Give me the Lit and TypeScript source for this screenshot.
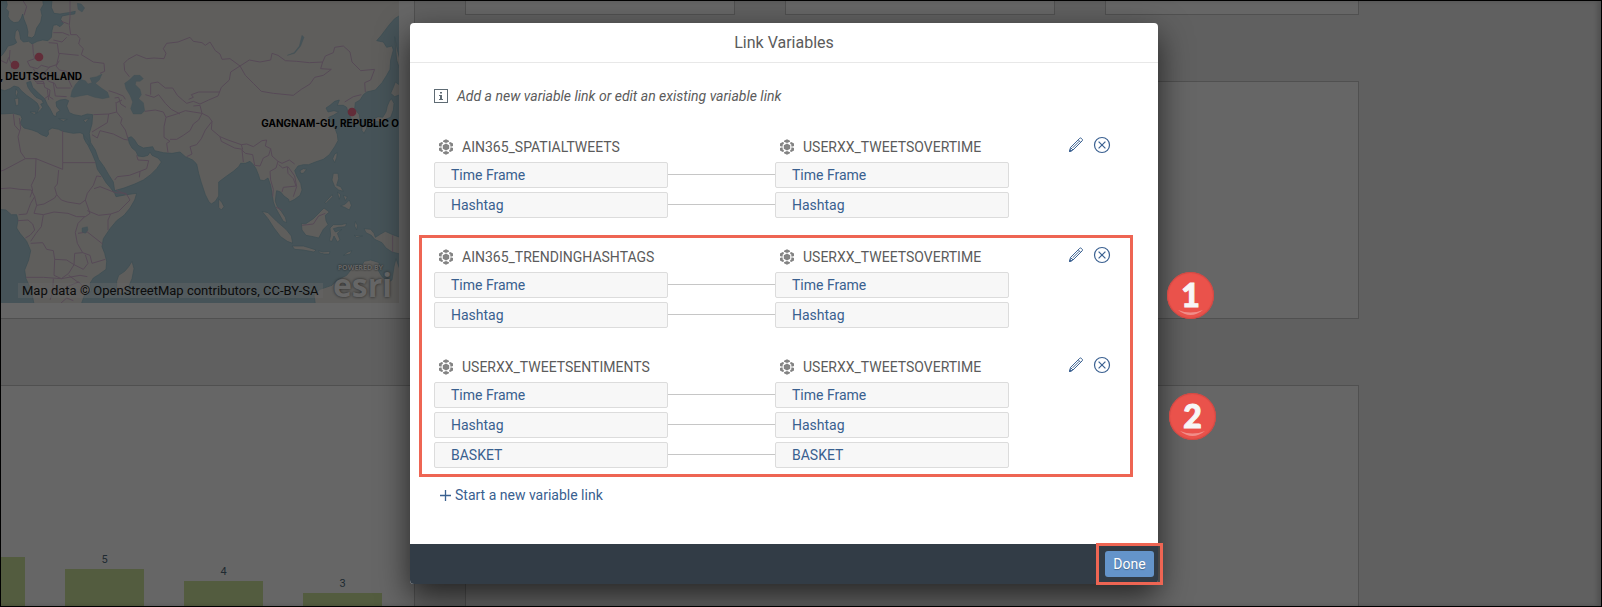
import { LitElement, html, css, svg } from "lit";
import { customElement, property } from "lit/decorators.js";

interface LinkGroup {
  source: string;
  target: string;
  variables: string[];
}

const FIRST: LinkGroup = {
  source: "AIN365_SPATIALTWEETS",
  target: "USERXX_TWEETSOVERTIME",
  variables: ["Time Frame", "Hashtag"],
};

const HIGHLIGHTED: LinkGroup[] = [
  {
    source: "AIN365_TRENDINGHASHTAGS",
    target: "USERXX_TWEETSOVERTIME",
    variables: ["Time Frame", "Hashtag"],
  },
  {
    source: "USERXX_TWEETSENTIMENTS",
    target: "USERXX_TWEETSOVERTIME",
    variables: ["Time Frame", "Hashtag", "BASKET"],
  },
];

// Column heights in units of the value axis; the first column runs off the left edge.
const COLUMNS = [
  { value: 6, label: "" },
  { value: 5, label: "5" },
  { value: 4, label: "4" },
  { value: 3, label: "3" },
];

const modelIcon = html`<svg class="model" viewBox="0 0 14 16" width="14" height="16" aria-hidden="true">
  <path d="M7 4.400l3.200 1.800v3.600L7 11.600 3.800 9.800V6.200z" />
  <path d="M4 1.800L7 .2l3 1.600v1L7 4 4 2.800z" />
  <path d="M4 14.200l3 1.600 3-1.600v-1L7 12l-3 1.200z" />
  <path d="M0 4.600l2.800-1.600 1 .600v1.300L2.700 5.600v1.900H1.200L0 6.900z" />
  <path d="M14 4.600L11.200 3l-1 .600v1.300l1.100.7v1.900h1.500l1.200-.6z" />
  <path d="M0 11.400L2.800 13l1-.6v-1.300l-1.100-.7V8.500H1.200L0 9.100z" />
  <path d="M14 11.400L11.200 13l-1-.6v-1.300l1.100-.7V8.500h1.500l1.200.6z" />
</svg>`;

@customElement("variable-link")
export class VariableLink extends LitElement {
  @property({ attribute: false }) group!: LinkGroup;

  static styles = css`
    :host {
      display: block;
    }
    .head,
    .row {
      display: grid;
      grid-template-columns: 234px 107px 234px 1fr;
      align-items: center;
    }
    .head {
      height: 32px;
    }
    .name {
      display: flex;
      align-items: center;
      gap: 9px;
      padding: 2px 0 0 5px;
      color: #5b5b5b;
      white-space: nowrap;
    }
    .target {
      grid-column: 3;
    }
    .model {
      fill: #838383;
      flex: none;
    }
    .actions {
      display: flex;
      justify-content: flex-end;
      align-items: center;
      gap: 9px;
      padding: 0 23px 2px 0;
    }
    button {
      display: flex;
      padding: 0;
      border: 0;
      background: none;
      color: #3b6191;
    }
    .row + .row {
      margin-top: 4px;
    }
    .variable {
      box-sizing: border-box;
      height: 26px;
      padding: 0 16px;
      border: 1px solid #dcdcdc;
      border-radius: 2px;
      background: #f7f7f7;
      color: #39608f;
      line-height: 24px;
    }
    .line {
      height: 1px;
      margin-bottom: 1px;
      background: #c6c6c6;
    }
  `;

  render() {
    const g = this.group;
    return html`
      <div class="head">
        <div class="name">${modelIcon}<span>${g.source}</span></div>
        <div class="name target">${modelIcon}<span>${g.target}</span></div>
        <div class="actions">
          <button aria-label="Edit link">
            <svg width="16" height="18" viewBox="0 0 16 18" fill="none" stroke="currentColor" stroke-width="1" stroke-linejoin="round">
              <path d="M1.500 15.500l1-4L11.700 2.300q.8-.7 1.600 0l.9.9q.7.8 0 1.600L5 14z" />
              <path d="M10.200 3.800l2.600 2.600M2.500 11.500L5 14M4.600 11.900l6.700-6.700" />
              <path d="M1.500 15.500l.5-2 1.500 1.400z" fill="currentColor" />
            </svg>
          </button>
          <button aria-label="Remove link">
            <svg width="18" height="18" viewBox="0 0 18 18" fill="none" stroke="currentColor" stroke-width="1.200">
              <circle cx="9" cy="9" r="7.500" />
              <path d="M5.600 5.600l6.800 6.800M12.400 5.600l-6.800 6.800" />
            </svg>
          </button>
        </div>
      </div>
      ${g.variables.map(
        (v) => html`<div class="row">
          <div class="variable">${v}</div>
          <div class="line"></div>
          <div class="variable">${v}</div>
        </div>`
      )}
    `;
  }
}

const LAND = [
  // Eurasia
  "M1200 0H156L154 22 162 40 180 42 205 38 226 34 224 42 206 44 186 48 182 58 190 70 180 80 170 74 160 76 156 92 154 112 144 122 128 120 112 124 96 132 86 124 70 126 62 118 58 96 52 88 46 96 44 114 50 128 40 134 24 138 16 152 6 166 0 170V268L14 272 30 266 42 258 56 262 64 272 80 286 100 300 112 310 118 324 110 340 120 332 128 322 122 312 130 310 126 300 108 292 92 274 84 262 80 248 92 244 98 262 116 280 134 296 142 314 150 326 160 346 168 350 170 338 180 332 170 320 168 306 180 300 196 298 206 302 200 318 208 338 222 344 244 348 262 342 278 344 276 372 268 400 272 428 286 450 296 478 312 500 326 524 340 546 344 572 372 564 404 552 430 540 452 524 470 506 484 486 474 474 456 466 450 456 444 466 430 470 414 468 408 454 396 444 388 430 384 414 394 410 404 420 414 436 430 444 446 442 458 440 464 452 490 458 516 460 540 456 556 470 578 480 588 490 590 492 596 520 604 548 616 584 626 604 634 612 646 604 656 588 656 546 680 528 700 514 716 500 722 490 736 490 750 484 760 494 768 506 776 526 780 540 792 542 804 534 812 556 816 580 820 606 826 622 836 640 850 664 860 668 856 652 844 634 832 620 826 604 828 584 830 572 842 576 852 588 866 598 868 606 884 598 900 586 906 570 902 550 890 528 884 512 894 498 910 494 926 494 946 486 970 478 988 464 1004 440 1014 422 1012 404 1006 388 994 370 986 352 1000 346 1016 336 1002 332 984 336 978 324 990 316 1004 304 1018 300 1012 316 1030 316 1040 322 1044 336 1052 352 1060 372 1070 370 1080 362 1078 344 1064 326 1066 308 1080 300 1090 284 1100 276 1126 270 1146 248 1160 226 1170 208 1172 180 1180 150 1176 138 1160 142 1150 126 1130 122 1144 106 1168 74 1184 56 1200 46z",
  // Scandinavia
  "M18 0L22 14 18 26 26 34 24 50 30 60 42 68 56 66 64 54 68 42 72 58 80 78 84 96 82 110 96 114 104 106 110 84 122 66 126 46 122 28 130 14 128 0z",
  // Africa
  "M0 342L40 340 62 346 66 356 60 370 72 384 96 390 112 396 124 404 140 410 146 402 144 392 156 384 176 388 188 394 220 400 240 398 250 402 252 416 264 436 276 460 286 484 292 508 306 528 318 548 330 562 344 580 348 590 380 584 410 580 404 600 390 624 372 646 350 662 330 686 310 716 306 740 314 760 320 784 318 808 296 824 280 834 270 850 274 874 254 884 244 912H102L94 870 78 836 74 810 86 780 92 752 80 724 60 700 50 684 54 660 50 644 34 644 18 630 0 628z",
  "M396 784L402 806 396 836 386 860 376 880 360 882 350 866 350 844 356 826 374 814 386 800z",
  "M656 596L666 608 672 620 664 630 656 622z",
  "M786 634L804 638 830 664 858 688 874 708 878 730 862 724 842 710 822 684 804 656z",
  "M876 738L910 738 930 744 948 750 942 756 910 750 884 748z",
  "M956 752L968 756 990 754 988 762 972 762 958 758zM1030 766L1044 756 1056 752 1050 762z",
  "M904 670L916 672 940 656 960 636 972 624 988 636 976 646 978 662 984 674 970 688 956 714 940 710 918 706 906 690z",
  "M990 684L1000 674 1024 674 1040 670 1036 680 1014 682 1000 686 1006 696 1026 688 1012 700 1020 720 1012 726 1002 708 996 724 988 722 992 706z",
  "M1066 664L1072 676 1070 690 1064 678zM1062 706L1088 708 1070 712z",
  "M1092 686L1112 688 1122 700 1126 712 1142 702 1156 694 1178 704 1200 712V762L1176 756 1158 744 1146 728 1124 718 1114 706 1098 698z",
  "M1000 520L1014 520 1016 536 1010 556 1022 560 1030 574 1016 570 1004 560 996 540z",
  "M1012 576L1022 584 1018 598zM1030 586L1042 590 1036 602zM1036 612L1048 600 1054 616 1048 630 1034 622 1022 618zM996 584L974 608 978 610 998 590z",
  "M1004 462L1012 458 1010 472 1004 488 998 476zM900 512L910 506 920 508 910 520 902 520z",
  "M1086 376L1098 374 1100 384 1092 400 1086 392zM1102 368L1120 358 1134 350 1148 352 1158 336 1162 318 1168 304 1174 296 1182 310 1180 330 1172 352 1156 358 1148 368 1130 364 1112 374z",
  "M1172 280L1180 262 1186 246 1200 256V284L1184 290z",
  "M1184 110L1192 150 1200 180V210L1190 180z",
  "M48 266L54 276 50 290 46 280zM44 296L56 294 56 314 48 318zM90 336L108 336 104 344zM176 356L202 358 190 364zM250 360L268 354 256 368z",
  // Australia
  "M946 912L942 884 960 868 996 856 1012 840 1040 826 1060 800 1082 806 1092 784 1112 780 1138 788 1134 810 1146 830 1166 846 1176 840 1182 800 1188 776 1200 810V912z",
];

const WATER = [
  "M212 290L216 272 226 254 240 238 256 242 264 252 276 248 270 234 290 230 306 222 298 240 286 250 304 264 322 276 328 292 308 296 284 292 262 284 240 288 222 292z",
  "M374 250L388 240 402 226 420 226 430 236 420 244 408 244 406 254 420 268 424 284 416 296 430 308 434 332 424 342 400 342 392 326 398 306 390 286 378 266z",
  "M862 166L882 158 898 138 906 106 912 112 902 138 884 160z",
  "M232 10L244 12 254 24 246 36 234 28z",
  "M246 684L262 680 264 690 256 700 246 696z",
  "M250 404L258 428 270 438 266 422z",
];

const BORDERS =
  "M98 132L100 160 104 176 82 184 90 200 112 206 124 196 146 202 170 194 178 160M68 0L80 20 72 46M210 0L210 50 208 76 212 104 230 104 240 116 236 132 250 146 244 164 280 186 312 190 314 214 300 220M184 64L206 72M160 98L188 98 208 106M160 120L186 126 200 112M146 128L172 130 176 160 236 166M30 150L28 178 36 196 34 206M0 180L20 190 26 172M178 182L168 198 178 210 200 214 206 240 216 262M100 206L110 222 130 220 150 200M86 240L100 236 108 246 130 244 134 262 150 270 148 290 160 298M110 250L134 250M130 224L146 244 164 250 170 264 212 264M160 248L166 288 200 290M142 268L146 300M134 296L150 284M326 272L350 280 370 288 376 298M344 294L356 292 362 312 378 322M350 308L366 300M280 344L326 342 350 336 348 306M326 342L322 368 292 386 276 396M350 336L366 356 362 370 376 390 384 416M276 404L292 414 300 392 340 402 372 418 384 420M434 334L466 330 490 336 498 352 492 380 492 412 510 424 500 430 504 458M498 352L530 342 556 332 580 336 606 340 596 360 580 372 570 392 550 406 530 418 510 418M374 212L372 190 384 178 410 164 440 176 462 174 492 176 498 160 490 146 500 130 534 126 570 112 580 124 606 128 616 136 630 126 646 152 660 162 666 178 690 176 720 198M388 230L374 212M452 284L452 250 474 246 496 264 518 264 532 286 548 300 560 310M436 284L462 292 476 284 496 310 514 328 540 342M566 298L580 292 574 284 596 276 660 276M560 310L580 304 600 312 626 300 654 288 664 262 688 240 692 216 720 198 748 180 780 186 812 180 816 160 834 166 856 182 890 184 928 188 968 186 962 206 994 208 970 226 944 232 930 252 904 268 880 286 820 280 784 274 760 250 736 226 720 198M968 186L976 168 1000 158 1004 142 1030 138 1050 156 1056 186 1082 212 1124 208 1112 240 1094 248 1096 276M1034 306L1060 290 1084 284M580 318L600 316 606 340 626 350 636 364 634 388 660 410 684 420 724 434 728 448 704 444 664 424 660 410M636 364L616 390 604 416 590 434 570 440 576 462 560 470M724 434L740 432 760 440 786 422 800 420 796 438 812 446 806 466 790 474 780 498 764 496 758 464 736 460 726 450 730 486M812 446L816 468 834 484 846 490 868 480 884 492M834 484L828 504 810 514 812 540 820 568 818 590M836 494L848 504 862 500 864 520 880 536 888 558 870 560 850 562 846 576M864 500L884 528 890 560 880 590M828 622L846 630M906 676L940 672 956 648 976 640M1178 706V756M344 540L352 530 388 526 420 514 440 506 446 482 414 480 410 466M420 514L418 532M188 392V488H286M58 354L62 384 54 410 62 456 76 476 108 476 188 508 188 488M40 342L44 376 58 392M0 514L12 510 76 476M108 476L106 530 94 556 98 570 90 592M176 510L172 552 164 562 170 584 184 600 202 606 240 612 256 600 262 580 280 556 290 528 304 530M0 566L30 564 60 568 94 570 104 590 92 610 80 642 56 644M104 590L110 616 132 612 164 594 170 584M110 616L102 640 130 644 162 636 204 640 230 650 256 650 270 640 256 600M262 632L296 646 332 642 356 634 390 600 378 580 346 578 300 560 282 566M332 642L324 660 324 690M378 584L350 570M54 662L84 660 98 672 104 690 90 706 76 714M130 644L124 680 108 700 92 724M92 730L128 728 140 748 160 752 164 778 200 780 222 794 224 760 248 758 232 730 226 698 234 670 254 650M234 700L262 696 308 732M248 758L270 766 276 790 316 778M164 778L162 826 184 836 206 820 222 794 250 808 264 790 256 764M78 832L130 832 184 836 240 826 262 830M160 836L158 876 150 900M158 870L184 876 206 858 236 846 250 860 240 880M206 826L236 848M180 912L200 894 220 902";

@customElement("app-root")
export class AppRoot extends LitElement {
  static styles = css`
    :host {
      display: block;
      font-family: Roboto, "Liberation Sans", sans-serif;
      font-size: 14px;
      line-height: 18px;
    }
    .page {
      position: relative;
      box-sizing: border-box;
      height: 100vh;
      border: 1px solid #000;
      overflow: hidden;
      background: #f0f0f0;
    }
    .board {
      display: grid;
      grid-template-columns: 414px minmax(0, 1fr);
      gap: 50px;
      height: 100%;
      padding-right: 242px;
      box-sizing: border-box;
    }
    .column {
      display: grid;
      gap: 66px;
      min-height: 0;
    }
    .left {
      grid-template-rows: 318px minmax(0, 1fr);
    }
    .right {
      grid-template-rows: 14px 238px minmax(0, 1fr);
    }
    .tiles {
      display: grid;
      grid-template-columns: 270px 270px minmax(0, 1fr);
      gap: 50px;
    }
    .card {
      box-sizing: border-box;
      min-width: 0;
      border: 1px solid #c8c8c8;
      background: #fff;
      overflow: hidden;
    }
    .card.flush-top {
      border-top: 0;
    }
    .card.flush-left {
      border-left: 0;
    }
    .card.flush-bottom {
      border-bottom: 0;
    }
    .map {
      position: relative;
      width: 398px;
      height: 302px;
      overflow: hidden;
      background: #afd0dc;
    }
    .map svg {
      display: block;
    }
    .land {
      fill: #edebe6;
      stroke: #93bccb;
      stroke-width: 2;
      stroke-linejoin: round;
    }
    .water {
      fill: #afd0dc;
      stroke: #93bccb;
      stroke-width: 1;
    }
    .border {
      fill: none;
      stroke: #d8b8d8;
      stroke-width: 3;
      stroke-linejoin: round;
    }
    .dot {
      fill: #f5708e;
    }
    .place {
      position: absolute;
      font: 700 10px/12px Inter, sans-serif;
      color: #000;
      white-space: nowrap;
    }
    .germany {
      top: 69px;
      right: 317px;
    }
    .korea {
      top: 116px;
      right: 0;
    }
    .credit {
      position: absolute;
      left: 17px;
      bottom: 5px;
      padding: 0 4px;
      background: rgba(255, 255, 255, 0.4);
      color: #222;
      font-size: 13px;
      line-height: 15px;
      white-space: nowrap;
    }
    .esri {
      position: absolute;
      right: 7px;
      bottom: 5px;
      color: #fff;
      text-align: right;
      text-shadow: 0 0 3px #555;
    }
    .powered {
      display: block;
      padding-right: 9px;
      font: 700 7px/8px "Open Sans", sans-serif;
      text-shadow: 0 0 2px #333;
    }
    .brand {
      display: block;
      font: 700 32px/26px "Open Sans", sans-serif;
    }
    .plot {
      display: flex;
      align-items: flex-end;
      gap: 40px;
      height: 100%;
      margin-left: -55px;
    }
    .bar-slot {
      width: 79px;
      flex: none;
      margin-bottom: -23px;
      color: #4f6a7a;
      font-size: 11px;
      text-align: center;
    }
    .bar {
      background: #cfe69f;
    }
    .shade {
      position: absolute;
      inset: 0;
      display: flex;
      justify-content: center;
      align-items: flex-start;
      padding: 22px 34px 0 0;
      background: rgba(0, 0, 0, 0.6);
      box-shadow: inset -4px 0 4px rgba(0, 0, 0, 0.15);
    }
    .dialog {
      position: relative;
      width: 748px;
      border-radius: 4px;
      background: #fff;
      box-shadow: 0 12px 32px rgba(0, 0, 0, 0.65);
    }
    h1 {
      margin: 0;
      padding: 10px 0 9px;
      border-bottom: 1px solid #e8e8e8;
      color: #5b5b5b;
      font-weight: 400;
      font-size: 16px;
      line-height: 20px;
      text-align: center;
    }
    .body {
      padding: 24px 24px 40px;
    }
    .info {
      display: flex;
      align-items: center;
      gap: 9px;
      height: 18px;
      margin-bottom: 25px;
      color: #5b5b5b;
      font-style: italic;
    }
    variable-link + variable-link {
      margin-top: 22px;
    }
    .framed {
      position: relative;
      margin-top: 22px;
    }
    .frame {
      position: absolute;
      border: 3px solid #ee6553;
      pointer-events: none;
    }
    .links-frame {
      inset: -5px 1px -9px -15px;
    }
    .start {
      display: flex;
      align-items: center;
      gap: 4px;
      margin-top: 18px;
      padding: 0 6px;
      border: 0;
      background: none;
      color: #39608f;
      font: inherit;
    }
    .footer {
      display: flex;
      justify-content: flex-end;
      padding: 7px 4px;
      border-radius: 0 0 4px 4px;
      background: #323c46;
    }
    .done-wrap {
      position: relative;
    }
    .done {
      display: block;
      min-width: 49px;
      height: 26px;
      padding: 0 8px;
      border: 0;
      border-radius: 3px;
      background: #6494ca;
      color: #fff;
      font: inherit;
      text-shadow: 0 1px 1px rgba(0, 0, 0, 0.3);
    }
    .done-frame {
      inset: -8px -9px;
    }
    .badge {
      position: absolute;
      width: 47px;
      height: 47px;
      color: #f7f7f7;
      font: 900 32px/46px Lato, sans-serif;
      -webkit-text-stroke: 1px #f7f7f7;
      text-align: center;
      border-radius: 50%;
      background: #ea524b;
      box-shadow: inset 0 0 1px 1px #cf4843;
    }
    .badge svg {
      position: absolute;
      left: 11px;
      bottom: 3px;
    }
    .one {
      left: 757px;
      top: 249px;
    }
    .two {
      left: 759px;
      top: 370px;
    }
  `;

  private badge(n: number, place: string) {
    return html`<div class="badge ${place}">
      ${n}
      <svg width="25" height="6" viewBox="0 0 25 6" aria-hidden="true">
        <path d="M0 0Q12.500 5 25 0Q12.500 10 0 0z" fill="#fff" opacity="0.350" />
      </svg>
    </div>`;
  }

  render() {
    return html`
      <div class="page">
        <div class="board">
          <div class="column left">
            <div class="card flush-top flush-left">
              <div class="map">
                <svg width="398" height="302" viewBox="3 3 1194 906" aria-hidden="true">
                  ${LAND.map((d) => svg`<path class="land" d=${d} />`)}
                  <path class="border" d=${BORDERS} />
                  ${WATER.map((d) => svg`<path class="water" d=${d} />`)}
                  <circle class="dot" cx="45" cy="195" r="13" />
                  <circle class="dot" cx="117" cy="171" r="13" />
                  <circle class="dot" cx="1056" cy="336" r="13" />
                </svg>
                <span class="place germany">F, DEUTSCHLAND</span>
                <span class="place korea">GANGNAM-GU, REPUBLIC O</span>
                <span class="credit">Map data © OpenStreetMap contributors, CC-BY-SA</span>
                <span class="esri"><span class="powered">POWERED BY</span><span class="brand">esri</span></span>
              </div>
            </div>
            <div class="card flush-left flush-bottom">
              <div class="plot">
                ${COLUMNS.map(
                  (c) => html`<div class="bar-slot">
                    ${c.label}
                    <div class="bar" style="height:${c.value * 12}px"></div>
                  </div>`
                )}
              </div>
            </div>
          </div>
          <div class="column right">
            <div class="tiles">
              <div class="card flush-top"></div>
              <div class="card flush-top"></div>
              <div class="card flush-top"></div>
            </div>
            <div class="card"></div>
            <div class="card flush-bottom"></div>
          </div>
        </div>
        <div class="shade">
          <section class="dialog" role="dialog" aria-labelledby="title">
            <h1 id="title">Link Variables</h1>
            <div class="body">
              <div class="info">
                <svg width="14" height="14" viewBox="0 0 14 14" aria-hidden="true">
                  <rect x=".5" y=".5" width="13" height="13" fill="none" stroke="#5f6b74" />
                  <path d="M6 3h2v1.500H6zM5 6h3v4h1v1H5v-1h1V7H5z" fill="#5f6b74" />
                </svg>
                <span>Add a new variable link or edit an existing variable link</span>
              </div>
              <variable-link .group=${FIRST}></variable-link>
              <div class="framed">
                ${HIGHLIGHTED.map((g) => html`<variable-link .group=${g}></variable-link>`)}
                <div class="frame links-frame"></div>
              </div>
              <button class="start">
                <svg width="11" height="11" viewBox="0 0 11 11" aria-hidden="true">
                  <path d="M5.500 0v11M0 5.500h11" stroke="currentColor" stroke-width="1.300" />
                </svg>
                <span>Start a new variable link</span>
              </button>
            </div>
            <div class="footer">
              <div class="done-wrap">
                <button class="done">Done</button>
                <div class="frame done-frame"></div>
              </div>
            </div>
            ${this.badge(1, "one")} ${this.badge(2, "two")}
          </section>
        </div>
      </div>
    `;
  }
}
